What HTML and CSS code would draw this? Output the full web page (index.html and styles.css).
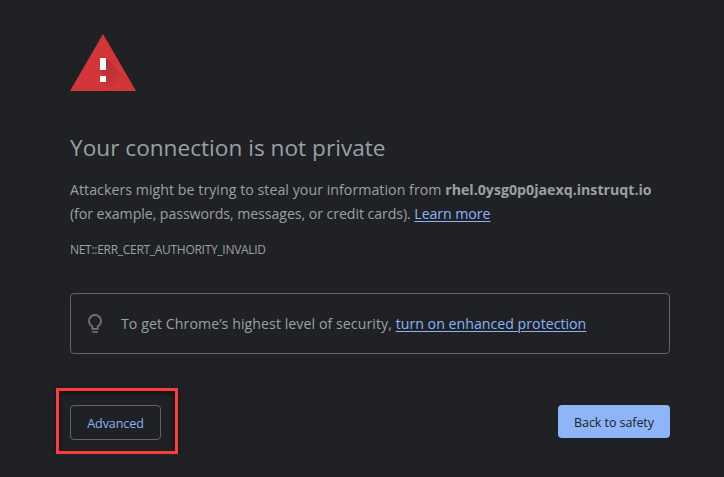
FILE: index.html
```html
<!DOCTYPE html>
<html lang="en">
<head>
<meta charset="utf-8">
<title>Privacy error</title>
<link rel="stylesheet" href="styles.css">
</head>
<body>
<main class="page">
  <svg class="warning" viewBox="0 0 66 57" width="66" height="57">
    <defs>
      <linearGradient id="shade" gradientUnits="userSpaceOnUse" x1="34" y1="28" x2="53" y2="47"><stop offset="0" stop-color="#972b2f" stop-opacity=".6"/><stop offset="1" stop-color="#972b2f" stop-opacity="0"/></linearGradient>
      <clipPath id="triangle"><path d="M33 0 66 57H0Z"/></clipPath>
    </defs>
    <path fill="#d33639" d="M33 0 66 57H0Z"/>
    <path clip-path="url(#triangle)" fill="url(#shade)" d="M36 24 69 57H41L30 48l6-6-6-6Z"/>
    <path fill="#fff" d="M30 24h6v12h-6zM30 42h6v6h-6z"/>
  </svg>
  <h1 class="title">Your connection is not private</h1>
  <p class="message"><span class="first">Attackers might be trying to steal your information from <strong>rhel.0ysg0p0jaexq.instruqt.io</strong></span><br><span class="second">(for example, passwords, messages, or credit cards). <a class="link" href="#">Learn more</a></span></p>
  <p class="code">NET::ERR_CERT_AUTHORITY_INVALID</p>
  <div class="promo">
    <svg class="bulb" viewBox="0 0 14 20" width="14" height="20"><path fill="none" stroke="#717476" stroke-width="1.8" d="M4.3 14.8v-2.6C2.2 11.1 1 9.3 1 7a6 6 0 0 1 12 0c0 2.3-1.2 4.1-3.3 5.2v2.6Z"/><path fill="#717476" d="M4 17.2h6v1.6H4z"/></svg>
    <p class="promo-text"><span class="lead">To get Chrome’s highest level of security, </span><a class="link" href="#">turn on enhanced protection</a></p>
  </div>
  <div class="actions">
    <div class="highlight"><button class="button advanced">Advanced</button></div>
    <button class="button safety">Back to safety</button>
  </div>
</main>
</body>
</html>
```
FILE: styles.css
```css
body{margin:0;background:#202124;color:#9aa0a6;font-family:"Open Sans","Noto Sans",sans-serif}
.page{padding:34px 54px 0 70px}
.warning{display:block}
.title{font-size:22.6px;font-weight:400;margin:41px 0 14px;line-height:32px;letter-spacing:.02px}
.message{margin:0;font-size:14.2px;line-height:24px;white-space:nowrap}
.first{letter-spacing:.035px}
.first strong{letter-spacing:0}
.second{letter-spacing:-.08px}
.lead{letter-spacing:.05px}
.link{color:#8ab4f8;text-decoration:underline;text-underline-offset:2px;text-decoration-thickness:1px}
.code{margin:15px 0 0;font-size:12px;line-height:18px;letter-spacing:-.29px}
.promo{box-sizing:border-box;width:600px;height:61px;margin-top:34px;border:1px solid #626467;border-radius:4px;display:flex;align-items:center;padding-left:17px;gap:19px}
.bulb{flex:none}
.promo-text{margin:0;font-size:14.2px;line-height:24px;white-space:nowrap}
.actions{display:flex;justify-content:space-between;align-items:flex-start;width:600px;margin-top:34px}
.highlight{box-sizing:border-box;width:122px;height:66px;margin-left:-14px;border:3px solid #fa3e3f;padding:14px 11px;box-shadow:0 2px 5px rgba(0,0,0,.5),inset 0 2px 5px rgba(0,0,0,.5)}
.button{box-sizing:border-box;display:block;margin:0;padding:2px 0 0;font:12.5px "Open Sans","Noto Sans",sans-serif;letter-spacing:-.07px;border-radius:4px;white-space:nowrap}
.advanced{width:91px;height:35px;border:1px solid #626467;background:#202124;color:#8ab4f8}
.safety{width:112px;height:33px;margin-top:17px;border:0;background:#8eb5f8;color:#202124}
```
